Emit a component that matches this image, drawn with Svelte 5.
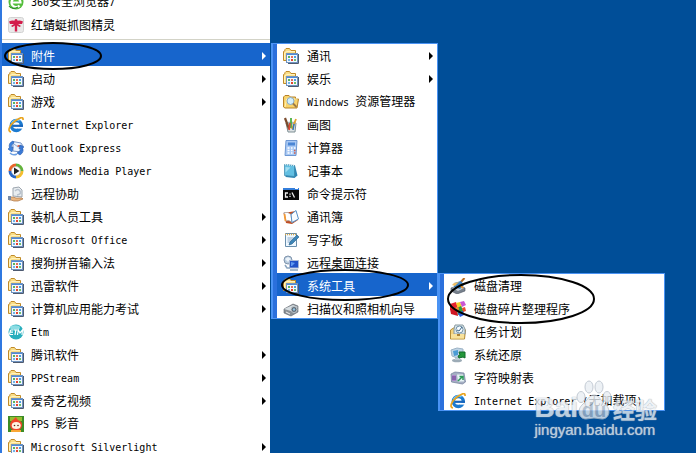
<script>
  const tools = [
    { icon: 'cleanup', text: '磁盘清理' },
    { icon: 'defrag', text: '磁盘碎片整理程序' },
    { icon: 'tasks', text: '任务计划' },
    { icon: 'restore', text: '系统还原' },
    { icon: 'charmap', text: '字符映射表' },
    { icon: 'ie', text: 'Internet Explorer (无加载项)' }
  ];

  const accessories = [
    { icon: 'folder', text: '通讯', more: true },
    { icon: 'folder', text: '娱乐', more: true },
    { icon: 'explorer', text: 'Windows 资源管理器' },
    { icon: 'paint', text: '画图' },
    { icon: 'calc', text: '计算器' },
    { icon: 'notepad', text: '记事本' },
    { icon: 'cmd', text: '命令提示符' },
    { icon: 'book', text: '通讯簿' },
    { icon: 'wordpad', text: '写字板' },
    { icon: 'remote', text: '远程桌面连接' },
    { icon: 'folder', text: '系统工具', more: true, children: tools },
    { icon: 'scanner', text: '扫描仪和照相机向导' }
  ];

  const programs = [
    { icon: 'browser', text: '360安全浏览器7' },
    { icon: 'dragonfly', text: '红蜻蜓抓图精灵' },
    { separator: true },
    { icon: 'folder', text: '附件', more: true, children: accessories },
    { icon: 'folder', text: '启动', more: true },
    { icon: 'folder', text: '游戏', more: true },
    { icon: 'ie', text: 'Internet Explorer' },
    { icon: 'outlook', text: 'Outlook Express' },
    { icon: 'media', text: 'Windows Media Player' },
    { icon: 'assist', text: '远程协助' },
    { icon: 'folder', text: '装机人员工具', more: true },
    { icon: 'folder', text: 'Microsoft Office', more: true },
    { icon: 'folder', text: '搜狗拼音输入法', more: true },
    { icon: 'folder', text: '迅雷软件', more: true },
    { icon: 'folder', text: '计算机应用能力考试', more: true },
    { icon: 'etm', text: 'Etm' },
    { icon: 'folder', text: '腾讯软件', more: true },
    { icon: 'folder', text: 'PPStream', more: true },
    { icon: 'folder', text: '爱奇艺视频', more: true },
    { icon: 'pps', text: 'PPS 影音' },
    { icon: 'folder', text: 'Microsoft Silverlight', more: true }
  ];

  // Latin runs use a smaller monospaced face so two letters span one ideograph.
  const runs = (text) => text.match(/[\x00-\x7f]+|[^\x00-\x7f]+/g);
  const isLatin = (run) => run.charCodeAt(0) < 128;
</script>

{#snippet icon(name)}
  <svg class="icon" viewBox="0 0 16 16" aria-hidden="true">
    {#if name === 'folder'}
      <path d="M5 15.500h10.500V6" fill="none" stroke="#4d5a70" />
      <path d="M.5 12.500V3.500L2 2.500V1.500L3 .5h3.500L8 2.500h4.500v10z" fill="#f9dd86" stroke="#c08a28" />
      <path d="M1.500 11.500V5L4 3.500h8" fill="none" stroke="#fff2be" />
      <rect x="3.500" y="5.500" width="11" height="9" fill="#f4f8fd" stroke="#6f93c0" />
      <path d="M4 6h10v1H4z" fill="#4f8ad6" />
      <path d="M5 8h2v2H5z" fill="#5cb55a" /><path d="M8 8h2v2H8z" fill="#e2705a" /><path d="M11 8h2v2h-2z" fill="#4a9ee0" />
      <path d="M5 11h2v2H5z" fill="#6fb5ea" /><path d="M8 11h2v2H8z" fill="#e2432f" /><path d="M11 11h2v2h-2z" fill="#6bbf70" />
    {:else if name === 'browser'}
      <circle cx="8" cy="8" r="7.500" fill="#55be3c" />
      <path d="M4.500 8.500h8A4.500 4.500 0 1 0 11.500 11.500" fill="none" stroke="#fff" stroke-width="2.200" />
      <path d="M1 12C3 15 7 15 10 13" fill="none" stroke="#2c8e27" stroke-width="1.200" />
    {:else if name === 'dragonfly'}
      <rect x=".5" y=".5" width="15" height="15" rx="2" fill="#e9e9e9" stroke="#d2d2d2" />
      <path d="M1 4.500Q5 2.500 8 4.500Q11 2.500 15 4.500L14 7L10 7L13 9L11.500 10L9.200 8.500V14.500H6.800V8.500L4.500 10L3 9L6 7H2z" fill="#d31d4b" />
      <circle cx="8" cy="3.500" r="1.500" fill="#d31d4b" />
    {:else if name === 'ie'}
      <circle cx="8.300" cy="8.500" r="5" fill="none" stroke="#1d7bd0" stroke-width="3.400" />
      <path d="M3.500 6.500a5.500 5.500 0 0 1 8-2.800" fill="none" stroke="#70c5f4" stroke-width="1.600" />
      <path d="M10 9.800h6v1.800h-6z" fill="#fff" />
      <path d="M5 8.800h10" stroke="#1866bd" stroke-width="2.200" />
      <path d="M3 15C-1 14.500 1.500 8 7 4S15.500-.5 15 3" fill="none" stroke="#eaa51f" stroke-width="1.700" />
    {:else if name === 'outlook'}
      <path d="M5 1.500l8 1.500 2 3-2 6-8-1z" fill="#edf5ff" stroke="#7795c7" />
      <path d="M6 4l4 3 4-2" fill="none" stroke="#8ba6d0" />
      <path d="M9.500 5h2.500v2H9.500z" fill="#d96c55" />
      <path d="M5 1Q0 3 1.500 8L0 9l4 3 1-5-1.500.5Q3 4 6 3z" fill="#3c82de" stroke="#2459ad" stroke-width=".6" />
      <path d="M12 15Q16.500 12 14.500 8L16 7l-4-2-1 4 1.500-.5Q13 11 9 13z" fill="#3979d6" stroke="#2459ad" stroke-width=".6" />
      <path d="M2 13q3 3 7 1" fill="none" stroke="#6ca0e4" stroke-width="1.500" />
    {:else if name === 'media'}
      <path d="M8 .500A7.500 7.500 0 0 0 .5 8H8z" fill="#e9662a" /><path d="M8 .500A7.500 7.500 0 0 1 15.500 8H8z" fill="#63b33b" />
      <path d="M.500 8A7.500 7.500 0 0 0 8 15.500V8z" fill="#2867c6" /><path d="M15.500 8A7.500 7.500 0 0 1 8 15.500V8z" fill="#f5be2d" />
      <circle cx="8" cy="8" r="4.500" fill="#fff" stroke="#b9bec8" stroke-width=".6" />
      <path d="M6 4.500L11.500 8L6 11.500z" fill="#222" />
    {:else if name === 'assist'}
      <path d="M5 2l6-1 3 3v7l-9-1z" fill="#e9edf0" stroke="#9ca5ae" />
      <path d="M7 5q3-3 5 0t-3 4" fill="none" stroke="#b8c1cc" stroke-width="1.500" />
      <path d="M1 11h4l3 1h6l1 1-5 2H6l-3-1H1z" fill="#eab782" stroke="#aa7141" stroke-width=".7" />
      <path d="M0 10h3v4H0z" fill="#778ba7" />
    {:else if name === 'etm'}
      <circle cx="8" cy="8" r="7.500" fill="#29aebd" /><ellipse cx="7" cy="3.500" rx="5" ry="2.200" fill="#8bdce3" />
      <path d="M2.500 6h3M2 8.200h3M1.500 10.500h3.500M2.500 6l-1 4.500M6 6h3.500M7.800 6l-.8 5M9.500 11l.8-5 1.700 3 2.500-3-.5 5" fill="none" stroke="#fff" stroke-width="1.200" />
    {:else if name === 'pps'}
      <path d="M0 0h16v16H0z" fill="#3c8c25" /><path d="M2 1h12v4H2z" fill="#95bd31" />
      <path d="M8 1Q6 3 4 4.500A6 6 0 1 0 13 5.500Q9 4 8 1z" fill="#f0442a" />
      <ellipse cx="8.200" cy="9.500" rx="4.500" ry="3.600" fill="#fff5e1" /><circle cx="6.500" cy="9.500" r=".8" fill="#5a2414" /><circle cx="10" cy="9.500" r=".8" fill="#5a2414" />
      <path d="M3 15h10" stroke="#f9a736" stroke-width="2" />
    {:else if name === 'explorer'}
      <path d="M.500 13V3L2 1.500h4L7.500 3h5V5h3L14 14H2z" fill="#f8d36b" stroke="#b88329" />
      <path d="M2 13l1.500-8h11" fill="none" stroke="#fff0b4" />
      <circle cx="7.500" cy="7" r="3.500" fill="#d3effc" stroke="#88aac6" /><path d="M10 9.500l3.500 3.500" stroke="#9c7946" stroke-width="1.800" />
    {:else if name === 'paint'}
      <path d="M3 6h10l-1 9H5z" fill="#dce2e4" stroke="#7e8f94" /><ellipse cx="8" cy="6" rx="5" ry="1.500" fill="#a8b5b9" />
      <path d="M6 12L2 1" stroke="#7b4b2d" stroke-width="2.200" /><path d="M8 11V1" stroke="#4baf43" stroke-width="1.800" />
      <path d="M9 12l4-10" stroke="#e2a22d" stroke-width="1.800" /><path d="M6 13l1-7" stroke="#d94835" stroke-width="1.800" /><path d="M10 13l1-6" stroke="#3177bc" stroke-width="1.500" />
    {:else if name === 'calc'}
      <path d="M3 .500h11l-1 15H2z" fill="#a9c9f4" stroke="#6d97d2" /><path d="M5 2.500h7v3H4.800z" fill="#4a86d5" />
      <path d="M4.500 8h2M8 8h1.500M11 8h1.500M4.500 10.500h2M8 10.500h1.500M4.500 13h2M8 13h1.500" stroke="#fff" stroke-width="1.500" /><path d="M11 10.500h1.500M11 13h1.500" stroke="#d35d45" stroke-width="1.500" />
    {:else if name === 'notepad'}
      <path d="M4 1.500l8 1 2.500 10-3 2.500-9-1z" fill="#2f86b4" /><path d="M1.500 1.500l10 1v11l-10-1z" fill="#62bfe2" stroke="#3b87aa" stroke-width=".7" />
      <path d="M2.500 4l5 .5-5 5z" fill="#a3dff2" /><path d="M2 1.500l10 1" stroke="#d8edf3" stroke-width="1.500" stroke-dasharray="1 1" />
    {:else if name === 'cmd'}
      <path d="M0 2h16v12H0z" fill="#080808" /><path d="M0 2h16v2H0z" fill="#347edb" /><path d="M12 2.500h3" stroke="#fff" />
      <path d="M5 7H2.500v4H5M7 7.500v1.200M7 9.800V11M9 6.500l2.500 5" fill="none" stroke="#eee" stroke-width="1.300" />
    {:else if name === 'book'}
      <path d="M.500 4L3 14l6 1 6-4-2-9" fill="#bf4e23" /><path d="M1 3.500q4-1 7 2l1 8q-3-3-6-1.500z" fill="#fff" stroke="#9d9795" stroke-width=".7" />
      <path d="M8 5.500l5-4 2.500 8.500-6.500 3.500z" fill="#f9fcff" stroke="#5492cb" /><path d="M2.500 12l-1-7" stroke="#f29a38" stroke-width="1.800" />
    {:else if name === 'wordpad'}
      <path d="M2.500 1.500h11v13h-11z" fill="#eff8ff" stroke="#698eac" /><path d="M2 2.500h12" stroke="#d8a64a" stroke-width="1.500" stroke-dasharray="1 1" />
      <path d="M4.500 6h7M4.500 8h5M4.500 10h4" stroke="#8cabca" /><path d="M6 13l1-3 7-7 2 2-7 7z" fill="#3d86b8" stroke="#255c87" stroke-width=".6" />
    {:else if name === 'remote'}
      <circle cx="5" cy="5" r="4" fill="#b8ccde" stroke="#8195ad" /><path d="M2 4l3-2 3 2-3 3z" fill="#edf4fa" />
      <path d="M6.500 5.500h9v7.500h-9z" fill="#2152c7" stroke="#a9b9d6" /><path d="M8 7l4 1-3 3H8z" fill="#5f98f1" /><path d="M7 15h8M2 10l2 3h3" fill="none" stroke="#8ba5bf" stroke-width="1.500" />
    {:else if name === 'scanner'}
      <path d="M1 8l9-5 5 2v6l-7 4-7-3z" fill="#8a9096" stroke="#5a6269" stroke-width=".6" /><path d="M1 8l9-4 5 2-7 4z" fill="#d7dee2" />
      <circle cx="11" cy="8.500" r="3" fill="#5d6975" stroke="#c0c8cd" /><circle cx="11" cy="8.500" r="1.200" fill="#94c6e4" /><path d="M3 11l4 2" stroke="#eee" />
    {:else if name === 'cleanup'}
      <path d="M1 10l8-3 6 3v3l-8 3-6-3z" fill="#77818d" stroke="#49535f" stroke-width=".6" /><path d="M2 10l7-2 5 2-6 3z" fill="#c3ccd6" />
      <path d="M14.500 0L10 5" stroke="#b66b20" stroke-width="2" /><path d="M4 5l7-2 3 4-4 4-6-2z" fill="#3f84c4" /><path d="M4 5l5-1-4 4-3-1z" fill="#f0bd62" /><path d="M10 7l3 3" stroke="#e79535" stroke-width="2" />
    {:else if name === 'defrag'}
      <path d="M0 3l6-2 2 6-8 2z" fill="#e72330" /><path d="M6 2l4-1 2 5-4 2z" fill="#f5d029" /><path d="M10 1l4-1 2 4-4 2z" fill="#c956d3" />
      <path d="M0 8l7-1 1 8-7-2z" fill="#cf1723" /><path d="M7 7l4-2 3 6-6 3z" fill="#2c9c44" /><path d="M12 7l3-1 1 4-3 1z" fill="#ed4d2a" /><path d="M8 12l5-2 1 4-4 2z" fill="#2d5ddd" /><circle cx="7" cy="8" r="2" fill="#f28a31" />
    {:else if name === 'tasks'}
      <path d="M.5 6l3-2h10l2 2-1 9H.5z" fill="#f4d27a" stroke="#b38d39" /><path d="M4 5l1-4h8l2 4v5H4z" fill="#dbe8ed" stroke="#89999f" />
      <circle cx="9.500" cy="5.500" r="3.500" fill="#f7fcff" stroke="#6f8ea5" /><path d="M9 7l3-4M9 7L7 6" stroke="#366489" /><path d="M1 10h13v4.500H1z" fill="#f8e29c" /><path d="M7 10h3v2H7z" fill="#ab8338" />
    {:else if name === 'restore'}
      <path d="M1 3l6-2 6 1v7l-6 2-5-2z" fill="#bfd4e5" stroke="#9cb2c5" /><path d="M3 4l5-1v5l-4 1z" fill="#4b9bd5" />
      <ellipse cx="7" cy="13.500" rx="5" ry="1.800" fill="#9cabb6" /><path d="M5 11h5v2H5z" fill="#bbc9d2" /><path d="M9 5h6v6l-2-1-4 1-1-2 2-1z" fill="#25973b" stroke="#126c2b" />
    {:else if name === 'charmap'}
      <path d="M1 4l4-2 9 1 1.500 9-3 2-11-2z" fill="#a5afc3" stroke="#6f7b98" stroke-width=".7" /><path d="M2 5h4v6H2z" fill="#ad8bca" /><path d="M3 6v4M5 6v4" stroke="#663b90" />
      <path d="M7 4.500h6l1 7H8z" fill="#e6f3f5" /><path d="M8 11l4-4M9.500 6.500H13V10" fill="none" stroke="#2c9a58" stroke-width="1.500" />
    {/if}
  </svg>
{/snippet}

{#snippet rows(items)}
  {#each items as item}
    {#if item.separator}
      <li class="separator" role="separator"></li>
    {:else}
      <li class:open={item.children}>
        <button type="button" aria-haspopup={item.more ? 'menu' : undefined}>
          {@render icon(item.icon)}
          <span class="label">{#each runs(item.text) as run}<span class:latin={isLatin(run)}>{run}</span>{/each}</span>
          {#if item.more}
            <svg class="arrow" viewBox="0 0 4 8" aria-hidden="true"><path d="M0 0L4 4L0 8z" /></svg>
          {/if}
        </button>
        {#if item.children}
          <ul class="menu flyout">{@render rows(item.children)}</ul>
        {/if}
      </li>
    {/if}
  {/each}
{/snippet}

<main class="desktop">
  <nav aria-label="程序">
    <ul class="menu programs">{@render rows(programs)}</ul>
  </nav>

  <svg class="marks" width="600" height="330" aria-hidden="true">
    <ellipse cx="53" cy="56" rx="48" ry="13" />
    <ellipse cx="345" cy="285" rx="63" ry="15" />
    <ellipse cx="521" cy="299" rx="73" ry="24" />
  </svg>

  <div class="watermark">
    <div class="brand">
      <span>Bai</span>
      <span class="paw">
        <svg viewBox="0 0 38 40" aria-hidden="true">
          <g fill="#e9eef3" stroke="#b4bec9">
            <ellipse cx="6" cy="17" rx="4" ry="5.500" /><ellipse cx="14" cy="7" rx="4" ry="6" />
            <ellipse cx="24" cy="7" rx="4" ry="6" /><ellipse cx="32" cy="17" rx="4" ry="5.500" />
            <path d="M19 15C14 15 12 21 8 24C1 30 4 39 11 39Q19 37 27 39C34 39 37 30 30 24C26 21 24 15 19 15z" />
          </g>
        </svg>
        <span class="du">du</span>
      </span>
      <span class="jingyan">经验</span>
    </div>
    <div class="site">jingyan.baidu.com</div>
  </div>
</main>

<style>
  :global(body) {
    margin: 0;
  }

  .desktop {
    position: relative;
    height: 100vh;
    overflow: hidden;
    background: #004e98;
    font-family: "Noto Sans CJK SC", sans-serif;
    font-size: 12px;
  }

  .menu {
    box-sizing: border-box;
    margin: 0;
    padding: 0;
    list-style: none;
    background: #fff;
  }

  .programs {
    width: 270px;
    margin-top: -11px;
    border-left: 2px solid #2f78e0;
  }

  .flyout {
    position: absolute;
    top: 0;
    left: calc(100% + 1px);
    min-width: 167px;
    padding: 0 1px 0 6px;
    background: linear-gradient(90deg, #4a93f4 0 2px, #2b70dc 2px 6px, #fff 6px);
    box-shadow: inset 0 0 0 1px #4a93f4;
  }

  .flyout .flyout {
    min-width: 227px;
  }

  li {
    position: relative;
  }

  button {
    display: flex;
    align-items: center;
    gap: 7px;
    box-sizing: border-box;
    width: 100%;
    height: 23px;
    padding: 2px 4px 0 6px;
    border: 0;
    background: none;
    color: #000;
    font: inherit;
    line-height: 20px;
    text-align: left;
    white-space: nowrap;
  }

  .flyout button {
    gap: 8px;
  }

  .open > button {
    background: #1765cc;
    color: #fff;
  }

  .icon {
    flex: none;
    width: 16px;
    height: 16px;
  }

  .label {
    flex: 1;
    white-space: pre;
  }

  .latin {
    font-family: "DejaVu Sans Mono", monospace;
    font-size: 10px;
  }

  .arrow {
    flex: none;
    width: 4px;
    height: 8px;
    fill: currentColor;
  }

  .separator {
    height: 1px;
    margin: 4px 0 3px;
    background: #d3d3c7;
  }

  .marks {
    position: absolute;
    top: 0;
    left: 0;
    pointer-events: none;
  }

  .marks ellipse {
    fill: none;
    stroke: #000;
    stroke-width: 2;
  }

  .watermark {
    position: absolute;
    right: 39px;
    bottom: 13px;
    color: #e9eef3;
    font-family: "Liberation Sans", "Noto Sans CJK SC", sans-serif;
    text-shadow: 0 0 1px #9aa7b5, 0 0 1px #9aa7b5;
    opacity: 0.8;
    pointer-events: none;
  }

  .brand {
    display: flex;
    align-items: flex-end;
    font-size: 28px;
    font-weight: bold;
    line-height: 24px;
  }

  .paw {
    position: relative;
    width: 38px;
    height: 40px;
    margin-left: -3px;
    text-align: center;
  }

  .paw svg {
    display: block;
    width: 38px;
    height: 40px;
  }

  .du {
    position: absolute;
    right: 0;
    bottom: 0;
    left: 0;
    color: #a3b3c5;
    font-size: 20px;
    line-height: 20px;
    text-shadow: none;
  }

  .jingyan {
    font-family: "Noto Sans CJK SC", sans-serif;
    font-size: 22px;
  }

  .site {
    font-size: 15px;
    line-height: 20px;
  }
</style>
